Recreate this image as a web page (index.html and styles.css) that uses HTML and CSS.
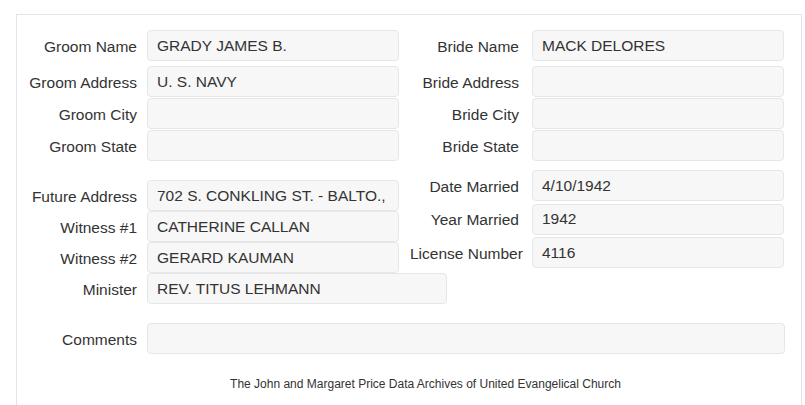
FILE: index.html
```html
<!DOCTYPE html>
<html lang="en">
  <head>
    <meta charset="UTF-8" />
    <title>Marriage Record</title>
    <link rel="stylesheet" href="styles.css">
  </head>
  <body>
    <div class="record-panel">
      <div class="section top-section">
        <div class="col col-left">
          <div class="field first">
            <label>Groom Name</label>
            <input type="text" readonly value="GRADY JAMES B." />
          </div>
          <div class="field">
            <label>Groom Address</label>
            <input type="text" readonly value="U. S. NAVY" />
          </div>
          <div class="field">
            <label>Groom City</label>
            <input type="text" readonly value="" />
          </div>
          <div class="field">
            <label>Groom State</label>
            <input type="text" readonly value="" />
          </div>
        </div>
        <div class="col col-right">
          <div class="field first">
            <label>Bride Name</label>
            <input type="text" readonly value="MACK DELORES" />
          </div>
          <div class="field">
            <label>Bride Address</label>
            <input type="text" readonly value="" />
          </div>
          <div class="field">
            <label>Bride City</label>
            <input type="text" readonly value="" />
          </div>
          <div class="field">
            <label>Bride State</label>
            <input type="text" readonly value="" />
          </div>
        </div>
      </div>

      <div class="section mid-section">
        <div class="col col-left">
          <div class="field">
            <label>Future Address</label>
            <input type="text" readonly value="702 S. CONKLING ST. - BALTO., MD" />
          </div>
          <div class="field">
            <label>Witness #1</label>
            <input type="text" readonly value="CATHERINE CALLAN" />
          </div>
          <div class="field">
            <label>Witness #2</label>
            <input type="text" readonly value="GERARD KAUMAN" />
          </div>
          <div class="field">
            <label>Minister</label>
            <input type="text" class="wide" readonly value="REV. TITUS LEHMANN" />
          </div>
        </div>
        <div class="col col-right">
          <div class="field">
            <label>Date Married</label>
            <input type="text" readonly value="4/10/1942" />
          </div>
          <div class="field">
            <label>Year Married</label>
            <input type="text" readonly value="1942" />
          </div>
          <div class="field">
            <label>License Number</label>
            <input type="text" readonly value="4116" />
          </div>
        </div>
      </div>

      <div class="field comments">
        <label>Comments</label>
        <input type="text" class="full" readonly value="" />
      </div>

      <p class="footer">The John and Margaret Price Data Archives of United Evangelical Church</p>
    </div>
  </body>
</html>
```

FILE: styles.css
```css
* {
  margin: 0;
  padding: 0;
  box-sizing: border-box;
}
body {
  background-color: #ffffff;
  color: #333333;
  font-family: "Liberation Sans", Arial, sans-serif;
  font-size: 15.5px;
}
.record-panel {
  margin: 14px 0 0 16px;
  width: 786px;
  height: 400px;
  border: 1px solid #e3e3e3;
  border-bottom: none;
  padding: 15px 0 0 11px;
}
.section {
  display: flex;
  align-items: flex-start;
}
.col-left {
  width: 382px;
  flex-shrink: 0;
}
.col {
  display: flex;
  flex-direction: column;
}
.field {
  display: flex;
  align-items: center;
}
.field label {
  width: 109px;
  flex-shrink: 0;
  text-align: right;
  white-space: nowrap;
  margin-right: 10px;
  padding-top: 2px;
}
.col-right .field label {
  margin-right: 13px;
}
.field input {
  flex-shrink: 0;
  width: 252px;
  height: 31px;
  padding: 0 9px;
  border: 1px solid #e6e6e6;
  border-radius: 4px;
  background-color: #f7f7f7;
  color: #333333;
  font-family: inherit;
  font-size: 15.5px;
  outline: none;
}
.field input.wide {
  width: 300px;
}
.field input.full {
  width: 638px;
}
/* groom / bride block */
.top-section .field {
  margin-bottom: 1px;
}
.top-section .field.first {
  margin-bottom: 5px;
}
/* address / date block */
.mid-section {
  margin-top: 8px;
}
.mid-section .col-left {
  padding-top: 10px;
}
.mid-section .col-right .field {
  margin-bottom: 2.5px;
}
.comments {
  margin-top: 19px;
}
.footer {
  margin-top: 22px;
  padding-left: 22px;
  text-align: center;
  font-size: 12px;
  line-height: 16px;
}
```
